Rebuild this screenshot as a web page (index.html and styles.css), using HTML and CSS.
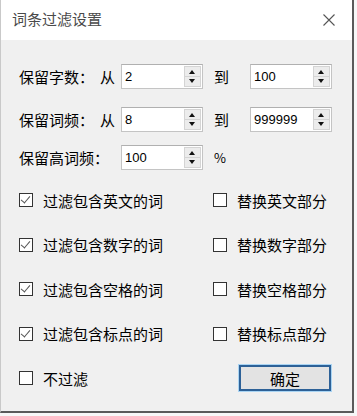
FILE: index.html
```html
<html>
  <head>
    <meta charset="UTF-8" />
    <meta name="viewport" content="width=device-width, initial-scale=1.0" />
    <link rel="stylesheet" href="styles.css">
  </head>
  <body>
    <div class="dialog">
      <div class="titleBar">
        <span class="title">词条过滤设置</span>
        <svg class="closeBtn" width="12" height="12" viewBox="0 0 12 12">
          <path d="M0.5 0.5 L11.5 11.5 M11.5 0.5 L0.5 11.5" stroke="#555" stroke-width="1.1" fill="none" />
        </svg>
      </div>
      <div class="content">
        <div class="rangeRow first">
          <span class="label">保留字数：</span>
          <span class="word">从</span>
          <div class="spinBox">
            <span class="spinValue">2</span>
            <div class="spinner"><span class="up"></span><span class="down"></span></div>
          </div>
          <span class="word to">到</span>
          <div class="spinBox">
            <span class="spinValue">100</span>
            <div class="spinner"><span class="up"></span><span class="down"></span></div>
          </div>
        </div>
        <div class="rangeRow second">
          <span class="label">保留词频：</span>
          <span class="word">从</span>
          <div class="spinBox">
            <span class="spinValue">8</span>
            <div class="spinner"><span class="up"></span><span class="down"></span></div>
          </div>
          <span class="word to">到</span>
          <div class="spinBox">
            <span class="spinValue">999999</span>
            <div class="spinner"><span class="up"></span><span class="down"></span></div>
          </div>
        </div>
        <div class="rangeRow third">
          <span class="label wide">保留高词频：</span>
          <div class="spinBox">
            <span class="spinValue">100</span>
            <div class="spinner"><span class="up"></span><span class="down"></span></div>
          </div>
          <span class="percent">%</span>
        </div>

        <div class="checkGrid">
          <div class="check"><span class="box checked"></span>过滤包含英文的词</div>
          <div class="check"><span class="box"></span>替换英文部分</div>
          <div class="check"><span class="box checked"></span>过滤包含数字的词</div>
          <div class="check"><span class="box"></span>替换数字部分</div>
          <div class="check"><span class="box checked"></span>过滤包含空格的词</div>
          <div class="check"><span class="box"></span>替换空格部分</div>
          <div class="check"><span class="box checked"></span>过滤包含标点的词</div>
          <div class="check"><span class="box"></span>替换标点部分</div>
          <div class="check"><span class="box"></span>不过滤</div>
          <div class="buttonCell"><button class="okBtn" type="button">确定</button></div>
        </div>
      </div>
    </div>
  </body>
</html>
```

FILE: styles.css
```css
body {
  margin: 0;
  background-color: #f7f7f7;
  font-family: "Noto Sans CJK SC", "Liberation Sans", sans-serif;
  font-size: 15px;
  color: #000;
}

.dialog {
  width: 351px;
  height: 411px;
  background-color: #f0f0f0;
  border-left: 1px solid #c9c9c9;
  border-right: 2px solid #5a5a5a;
  border-bottom: 2px solid #5a5a5a;
  box-sizing: content-box;
}

.titleBar {
  height: 40px;
  background-color: #fff;
  display: flex;
  align-items: center;
  justify-content: space-between;
  padding: 0 17px 0 11px;
  box-sizing: border-box;
}

.title {
  color: #4a4a4a;
  font-size: 15px;
  margin-bottom: 4px;
}

.closeBtn {
  margin-bottom: 1px;
}

.content {
  padding: 24px 0 0 18px;
}

.rangeRow {
  display: flex;
  align-items: center;
  height: 25px;
}
.rangeRow.second {
  margin-top: 18px;
}
.rangeRow.third {
  margin-top: 13px;
}

.label {
  width: 81px;
}
.label.wide {
  width: 102px;
}

.word {
  width: 21px;
}
.word.to {
  width: 36px;
  padding-left: 11px;
}

.percent {
  margin-left: 11px;
  font-size: 13px;
}

.spinBox {
  width: 82px;
  height: 25px;
  box-sizing: border-box;
  background-color: #fff;
  border: 1px solid #c4c4c4;
  border-top-color: #b0b0b0;
  display: flex;
  align-items: center;
  justify-content: space-between;
}

.spinValue {
  font-family: "Liberation Sans", sans-serif;
  font-size: 13px;
  padding-left: 3px;
}

.spinner {
  width: 17px;
  height: 21px;
  margin-right: 1px;
  display: flex;
  flex-direction: column;
}

.spinner span {
  flex: 1;
  background-color: #ececec;
  border: 1px solid #d4d4d4;
  position: relative;
}
.spinner span + span {
  border-top: none;
}
.spinner .up::after,
.spinner .down::after {
  content: "";
  position: absolute;
  left: 4px;
  top: 3px;
  border-left: 3.5px solid transparent;
  border-right: 3.5px solid transparent;
}
.spinner .up::after {
  border-bottom: 4px solid #111;
}
.spinner .down::after {
  top: 2px;
  border-top: 4px solid #111;
}

.checkGrid {
  display: grid;
  grid-template-columns: 194px 1fr;
  grid-auto-rows: 20px;
  row-gap: 24.5px;
  margin-top: 20px;
}

.check {
  display: flex;
  align-items: center;
  height: 20px;
}

.box {
  width: 12px;
  height: 12px;
  border: 1px solid #333;
  background-color: #fff;
  margin-right: 10px;
  position: relative;
}
.box.checked::after {
  content: "";
  position: absolute;
  left: 3px;
  top: 0px;
  width: 4px;
  height: 8px;
  border-right: 1.5px solid #555;
  border-bottom: 1.5px solid #555;
  transform: rotate(40deg);
}

.buttonCell {
  display: flex;
  align-items: center;
  padding-left: 26px;
}

.okBtn {
  width: 92px;
  height: 26px;
  background-color: #e3e3e3;
  border: 2px solid #2d6197;
  box-shadow: 0 0 0 1px #a9d4f3;
  font-family: "Noto Sans CJK SC", sans-serif;
  font-size: 15px;
  color: #000;
  padding: 0;
}
```
